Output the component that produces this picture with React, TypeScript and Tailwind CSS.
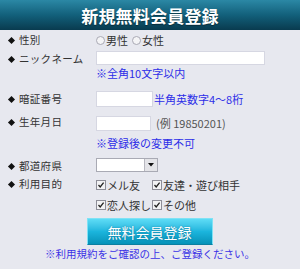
import React from 'react';

const font = { fontFamily: '"Noto Sans CJK JP", "Noto Sans", sans-serif' };

const Label: React.FC<{ text: string; className?: string }> = ({ text, className = '' }) => (
  <div className={`w-[96px] shrink-0 flex items-center pl-[9px] text-[10.5px] leading-none text-[#333] ${className}`}>
    <span className="w-[5px] h-[5px] rotate-45 bg-[#111] mr-[5px]" />
    <span className="tracking-[0.3px]">{text}</span>
  </div>
);

const Radio = () => (
  <span className="inline-block w-[9px] h-[9px] rounded-full border border-[#a9a9b4] bg-[#f4f4f6] mr-[1px]" />
);

const Check = () => (
  <svg width="10" height="10" viewBox="0 0 10 10" className="mr-[1px] shrink-0">
    <rect x="0.5" y="0.5" width="9" height="9" fill="#f2f2f4" stroke="#8e8e98" />
    <path d="M2.5 5 L4.2 7 L7.6 2.6" fill="none" stroke="#222" strokeWidth="1.3" />
  </svg>
);

export default function App() {
  return (
    <div className="w-[300px] h-[269px] bg-[#e7e8ef] overflow-hidden flex flex-col" style={font}>
      {/* Header */}
      <div className="h-[30px] shrink-0 flex items-center justify-center bg-gradient-to-b from-[#2b88a5] via-[#12607b] to-[#093b4f]">
        <span className="text-white font-bold text-[17px] leading-none tracking-[0.2px] [text-shadow:0_1px_1px_rgba(0,0,0,0.4)]">
          新規無料会員登録
        </span>
      </div>

      {/* 性別 */}
      <div className="mt-[3px] h-[14px] flex items-center">
        <Label text="性別" />
        <div className="flex items-center text-[11px] leading-none text-[#333]">
          <Radio />
          <span className="mr-[4px]">男性</span>
          <Radio />
          <span>女性</span>
        </div>
      </div>

      {/* ニックネーム */}
      <div className="mt-[4px] h-[14px] flex items-center">
        <Label text="ニックネーム" className="pt-[2px]" />
        <div className="w-[169px] h-[14px] bg-white border border-[#d6d7e2]" />
      </div>
      <div className="mt-[1px] h-[14px] flex items-center pl-[96px] text-[11px] leading-none text-[#2d2ee8]">
        ※全角10文字以内
      </div>

      {/* 暗証番号 */}
      <div className="mt-[11px] h-[16px] flex items-center">
        <Label text="暗証番号" />
        <div className="w-[57px] h-[16px] bg-white border border-[#d6d7e2]" />
        <span className="ml-[1px] text-[11px] leading-none text-[#2d2ee8]">半角英数字4～8桁</span>
      </div>

      {/* 生年月日 */}
      <div className="mt-[9px] h-[15px] flex items-center">
        <Label text="生年月日" className="self-start pt-[1px]" />
        <div className="w-[55px] h-[15px] bg-white border border-[#d6d7e2]" />
        <span className="ml-[5px] text-[11px] leading-none text-[#555]">(例 19850201)</span>
      </div>
      <div className="mt-[5px] h-[14px] flex items-center pl-[96px] text-[11px] leading-none text-[#2d2ee8]">
        ※登録後の変更不可
      </div>

      {/* 都道府県 */}
      <div className="mt-[8px] h-[14px] flex items-center">
        <Label text="都道府県" className="pt-[3px]" />
        <div className="w-[62px] h-[14px] bg-white border border-[#a9aab4] flex justify-end">
          <div className="w-[13px] h-full bg-[#e4e4e8] border-l border-[#b8b8c0] flex items-center justify-center">
            <svg width="6" height="4" viewBox="0 0 6 4">
              <path d="M0 0 H6 L3 3.5 Z" fill="#111" />
            </svg>
          </div>
        </div>
      </div>

      {/* 利用目的 */}
      <div className="mt-[6px] h-[14px] flex items-center">
        <Label text="利用目的" className="self-start pt-[1px]" />
        <div className="flex items-center text-[11px] leading-none text-[#333]">
          <Check />
          <span className="w-[45px]">メル友</span>
          <Check />
          <span>友達・遊び相手</span>
        </div>
      </div>
      <div className="mt-[6px] h-[14px] flex items-center pl-[96px] text-[11px] leading-none text-[#333]">
        <Check />
        <span className="mr-[1px]">恋人探し</span>
        <Check />
        <span>その他</span>
      </div>

      {/* Button */}
      <div className="mt-[6px] flex justify-center">
        <button className="w-[126px] h-[27px] ml-[-1px] bg-gradient-to-b from-[#5ddcf6] via-[#1bb5dd] to-[#0592b8] border border-[#7fe2f5] border-b-[#0b7fa0] flex items-center justify-center">
          <span className="text-white text-[14px] leading-none [text-shadow:0_0_2px_rgba(0,60,90,0.5)]">無料会員登録</span>
        </button>
      </div>
      <div className="mt-[2px] h-[14px] flex items-center justify-center text-[10.5px] leading-none text-[#3a32e6]">
        ※利用規約をご確認の上、ご登録ください。
      </div>
    </div>
  );
}
